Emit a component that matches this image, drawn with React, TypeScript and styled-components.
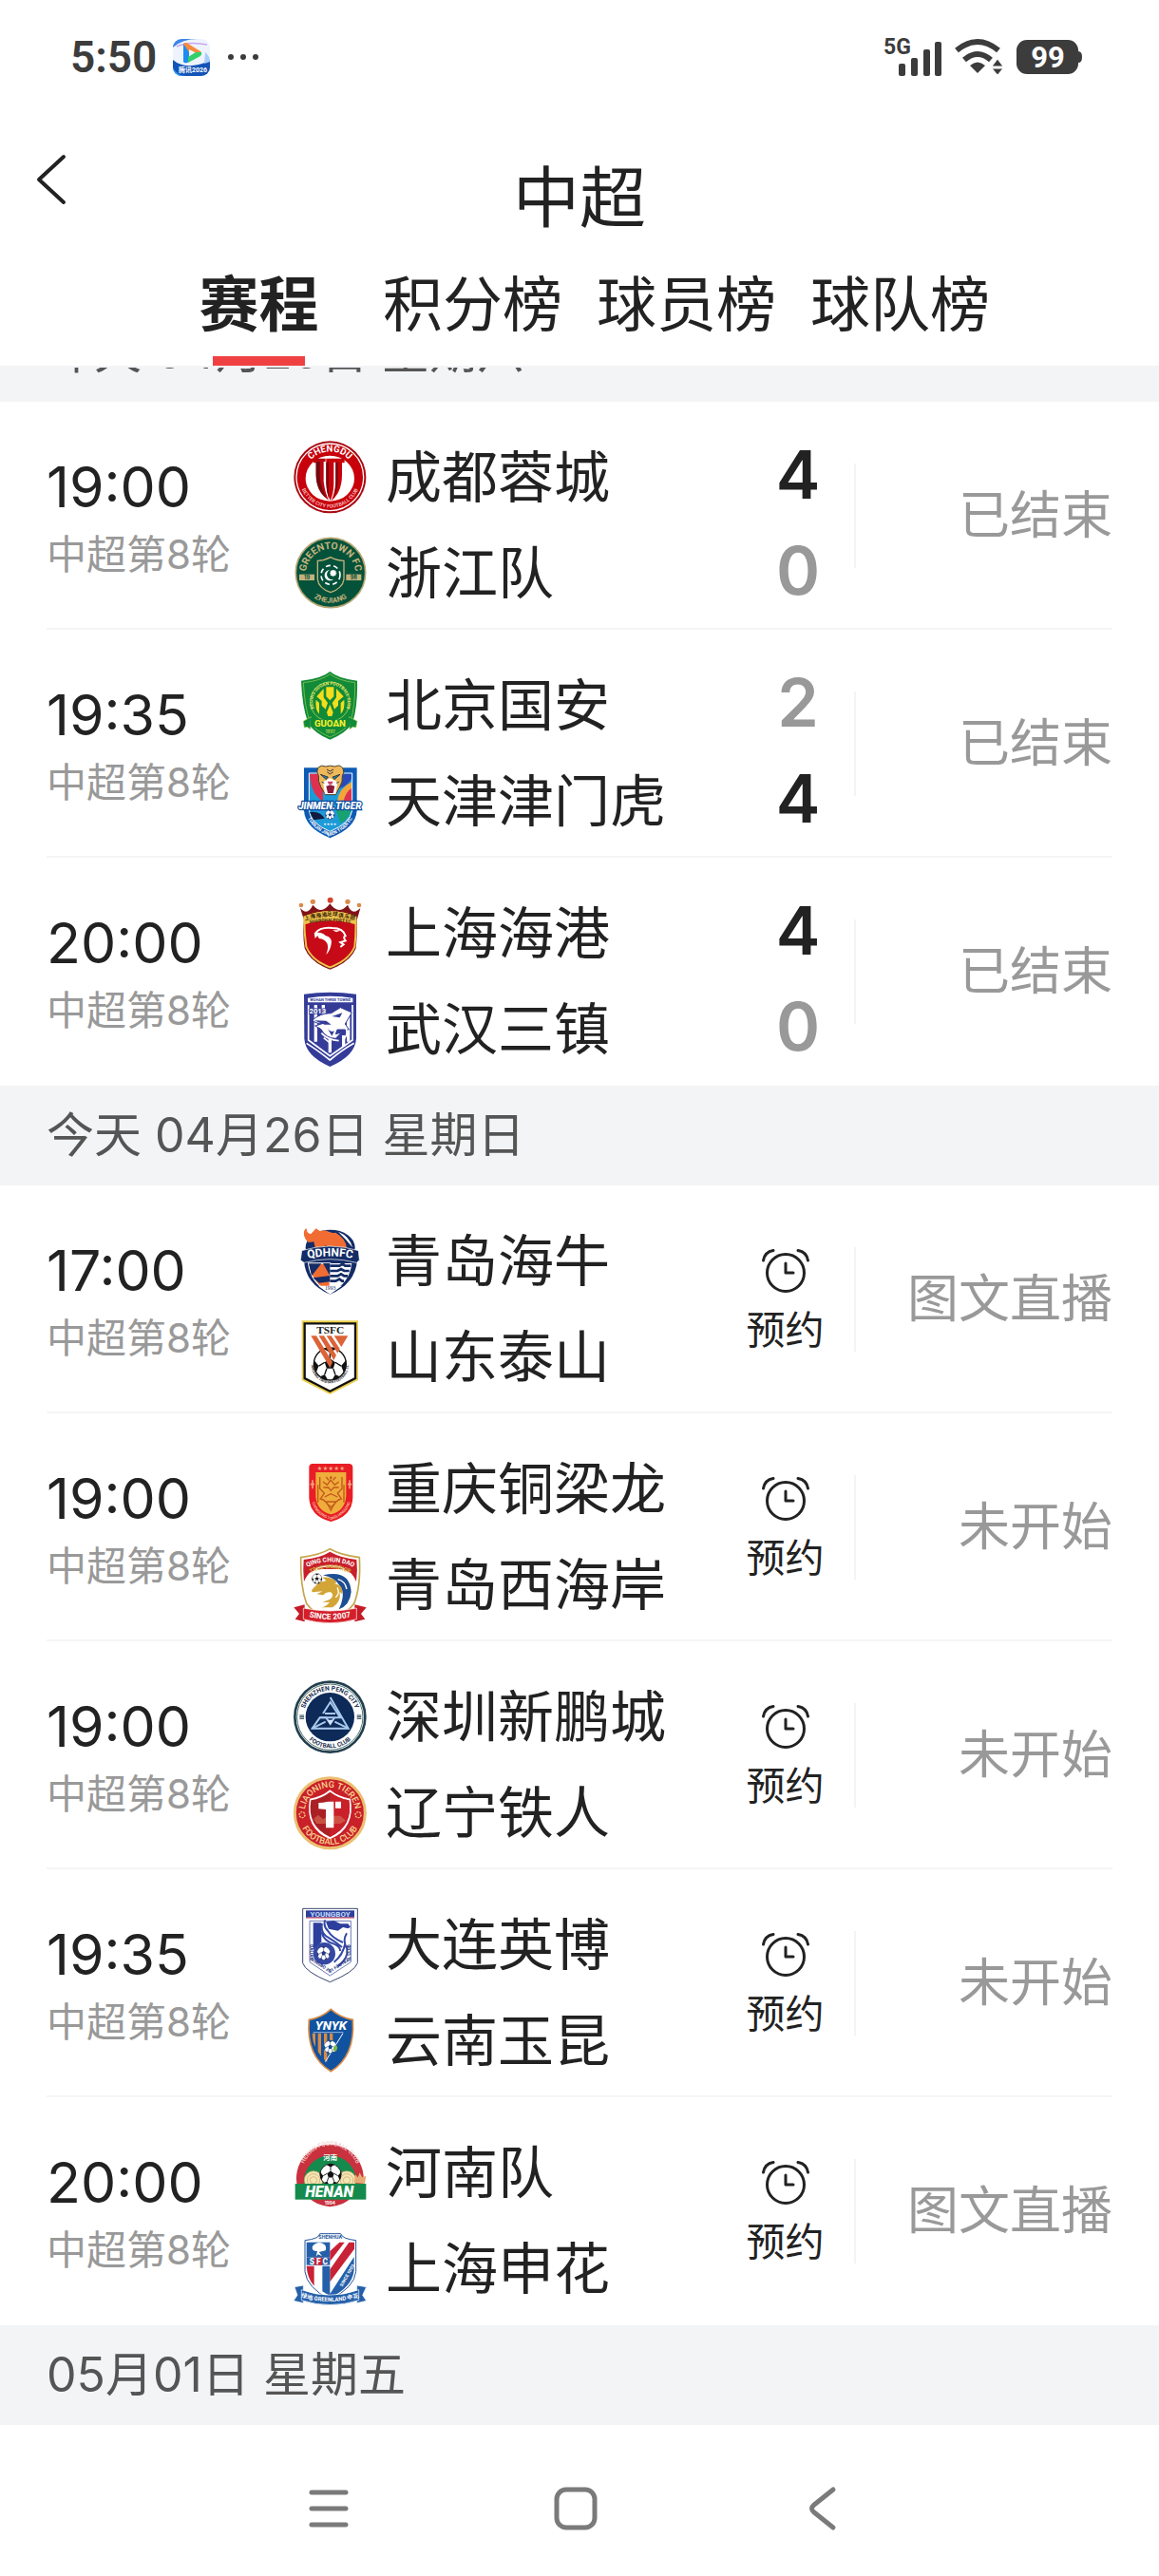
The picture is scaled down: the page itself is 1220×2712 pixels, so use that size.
import React, { useState } from 'react';
import styled, { createGlobalStyle } from 'styled-components';

const INK = '#222';
const MUTED = '#999';
const STRIP = '#f3f4f6';
const STATUS_INK = '#3c3c3c';

const GlobalStyle = createGlobalStyle`
  * { box-sizing: border-box; }
  body {
    margin: 0;
    background: #fff;
    color: ${INK};
    font-family: Inter, "Noto Sans CJK SC", sans-serif;
  }
  button {
    margin: 0;
    padding: 0;
    border: 0;
    background: none;
    color: inherit;
    font: inherit;
    cursor: pointer;
  }
  h1, h2, p, ul { margin: 0; padding: 0; font-weight: 400; list-style: none; }
  a { color: inherit; text-decoration: none; }
  svg { display: block; overflow: visible; }
`;

const Screen = styled.div`
  display: flex;
  flex-direction: column;
  min-height: 100vh;
  background: #fff;
`;

const StatusBar = styled.div`
  display: flex;
  align-items: center;
  justify-content: space-between;
  height: 120px;
  padding: 0 80px 0 74px;
  color: ${STATUS_INK};
  font-family: Roboto, "Noto Sans CJK SC", sans-serif;
`;

const StatusGroup = styled.div<{ $gap: number }>`
  display: flex;
  align-items: center;
  gap: ${(p) => p.$gap}px;
`;

const Clock = styled.span`
  font-size: 46px;
  line-height: 48px;
  font-weight: 600;
`;

const TitleBar = styled.header`
  display: grid;
  grid-template-columns: 100px 1fr 100px;
  height: 140px;
`;

const BackButton = styled.button`
  display: flex;
  align-items: flex-start;
  padding: 40px 0 0 36px;
`;

const Title = styled.h1`
  padding-top: 39px;
  font-size: 70px;
  line-height: 100px;
  text-align: center;
`;

const Tabs = styled.nav`
  display: flex;
  justify-content: center;
  height: 125px;
`;

const Tab = styled.button<{ $active: boolean }>`
  display: flex;
  flex-direction: column;
  align-items: center;
  justify-content: space-between;
  width: 225px;
  padding-top: 20px;
  font-size: 63px;
  line-height: 80px;
  font-weight: ${(p) => (p.$active ? 700 : 400)};

  &::after {
    content: '';
    width: 97px;
    height: 10px;
    background: ${(p) => (p.$active ? '#f04142' : 'transparent')};
  }
`;

const Viewport = styled.main`
  overflow: hidden;
  border-top: 2px solid ${STRIP};
`;

/* The list is scrolled by most of one date strip. */
const Scrolled = styled.div`
  margin-top: -69px;
`;

const DateStrip = styled.h2`
  height: 105px;
  padding: 0 49px;
  background: ${STRIP};
  color: #555;
  font-size: 50px;
  line-height: 105px;
`;

const MatchList = styled.ul`
  padding: 0 49px;
`;

const MatchRow = styled.li`
  display: flex;
  height: 240px;

  &:not(:last-child) {
    border-bottom: 2px solid #f5f5f5;
  }
`;

const TimeColumn = styled.div`
  display: flex;
  flex-direction: column;
  gap: 19px;
  width: 260px;
  padding-top: 59px;
`;

const Kickoff = styled.time`
  font-size: 59px;
  line-height: 62px;
`;

const Round = styled.span`
  color: ${MUTED};
  font-size: 42px;
  line-height: 42px;
`;

const Teams = styled.div`
  display: flex;
  flex: 1;
  flex-direction: column;
  gap: 24px;
  padding-top: 41px;
`;

const Team = styled.div`
  display: flex;
  align-items: center;
  gap: 20px;
  height: 77px;
  font-size: 59px;
  line-height: 77px;
  white-space: nowrap;
`;

const Scores = styled.div`
  display: flex;
  flex-direction: column;
  gap: 24px;
  width: 145px;
  padding: 38px 0 0 27px;
`;

const Score = styled.span<{ $winner: boolean }>`
  color: ${(p) => (p.$winner ? INK : MUTED)};
  font-size: 70px;
  line-height: 77px;
  font-weight: 600;
  text-align: center;
`;

const Reserve = styled.button`
  display: flex;
  flex-direction: column;
  align-items: center;
  gap: 16px;
  width: 145px;
  padding-top: 65px;
  font-size: 41px;
  line-height: 42px;
`;

const StateColumn = styled.div`
  display: flex;
  align-items: center;
  justify-content: flex-end;
  width: 272px;
  height: 110px;
  margin-top: 65px;
  border-left: 2px solid #f4f4f4;
  color: ${MUTED};
  font-size: 54px;
  line-height: 60px;
`;

const SystemNav = styled.nav`
  display: flex;
  flex: 1;
  align-items: center;
  justify-content: center;
  gap: 200px;
  padding: 16px 8px 0 0;
  color: #7a7a7a;
`;

const NavButton = styled.button`
  display: grid;
  place-items: center;
  width: 60px;
  height: 60px;
`;

/* ---------- small drawings ---------- */

const VideoAppIcon = () => (
  <svg width="39" height="39" viewBox="0 0 39 39" aria-hidden="true">
    <defs>
      <clipPath id="appClip"><rect width="39" height="39" rx="9" /></clipPath>
    </defs>
    <g clipPath="url(#appClip)">
      <rect width="39" height="39" fill="#eef4fd" />
      <path d="M0 9Q10 0 26 0H0Z" fill="#3d86e8" />
      <path d="M4 8Q16 2 36 6" stroke="#c9a7ee" strokeWidth="1.5" fill="none" />
      <path d="M0 22Q8 29 20 28T39 22V39H0Z" fill="#1454b8" />
      <path d="M34 14Q39 18 39 24L33 26Z" fill="#a9cdf8" />
      <path d="M0 30Q4 39 14 39H0Z" fill="#35a4ff" />
      <path d="M11 5V24Q12 26 15 25L17 24V12Z" fill="#1e8bf0" />
      <path d="M11 5Q13 3 16 5L29 13Q31 15 29 17L17 11V14Z" fill="#f78a3c" />
      <path d="M30 14Q31 16 29 18L16 25V19L24 14Z" fill="#33cf6a" />
      <text x="21" y="35" fontSize="7" fontWeight="700" fill="#fff" textAnchor="middle">腾讯2026</text>
    </g>
  </svg>
);

const Dots = () => (
  <svg width="36" height="8" viewBox="0 0 36 8" fill="currentColor" aria-hidden="true">
    <circle cx="5" cy="4" r="3" /><circle cx="18" cy="4" r="3" /><circle cx="31" cy="4" r="3" />
  </svg>
);

const Signal = () => (
  <svg width="62" height="42" viewBox="0 0 62 42" fill="currentColor" aria-label="5G">
    <text x="0" y="18" fontSize="23" fontWeight="700">5G</text>
    <rect x="16" y="28" width="7" height="13" rx="2" />
    <rect x="29" y="22" width="7" height="19" rx="2" />
    <rect x="42" y="13" width="7" height="28" rx="2" />
    <rect x="54" y="5" width="7" height="36" rx="2" />
  </svg>
);

const Wifi = () => (
  <svg width="52" height="38" viewBox="0 0 52 38" aria-hidden="true">
    <g fill="none" stroke="currentColor" strokeWidth="6">
      <path d="M2 12Q24 -6 46 12" />
      <path d="M10 22Q24 10 38 22" />
    </g>
    <path d="M16 28Q24 21 32 28L24 36Z" fill="currentColor" />
    <path d="M45 21L51 29H39ZM39 31H51L45 38Z" fill="currentColor" stroke="#fff" strokeWidth="1" />
  </svg>
);

const Battery = () => (
  <svg width="70" height="36" viewBox="0 0 70 36" aria-label="99%">
    <rect width="65" height="36" rx="11" fill="currentColor" />
    <path d="M65 12Q69 12 69 18T65 24Z" fill="currentColor" />
    <text x="33" y="29" fontSize="31" fontWeight="700" fill="#fff" textAnchor="middle">99</text>
  </svg>
);

const BackChevron = () => (
  <svg width="34" height="58" viewBox="0 0 34 58" fill="none" stroke="currentColor" strokeWidth="4" strokeLinecap="round" strokeLinejoin="round" aria-hidden="true">
    <path d="M31 5L5 29L31 53" />
  </svg>
);

const AlarmIcon = () => (
  <svg width="52" height="50" viewBox="0 0 52 50" fill="none" stroke="currentColor" strokeWidth="3" strokeLinecap="round" aria-hidden="true">
    <circle cx="26" cy="27" r="19.5" />
    <path d="M26 17V27H34" strokeLinejoin="round" />
    <path d="M2.500 14Q4 5 13 3.500M49.500 14Q48 5 39 3.500" />
  </svg>
);

const MenuIcon = () => (
  <svg width="42" height="42" viewBox="0 0 42 42" stroke="currentColor" strokeWidth="5" strokeLinecap="round" aria-hidden="true">
    <path d="M3 4H39M3 21H39M3 38H39" />
  </svg>
);

const HomeIcon = () => (
  <svg width="46" height="46" viewBox="0 0 46 46" fill="none" stroke="currentColor" strokeWidth="5" aria-hidden="true">
    <rect x="3" y="3" width="40" height="40" rx="10" />
  </svg>
);

const NavBackIcon = () => (
  <svg width="30" height="46" viewBox="0 0 30 46" fill="none" stroke="currentColor" strokeWidth="5" strokeLinecap="round" aria-hidden="true">
    <path d="M26 3L6 19Q1 23 6 27L26 43" />
  </svg>
);

/* ---------- club crests ---------- */

type ArcProps = {
  id: string;
  d: string;
  size: number;
  fill: string;
  weight?: number;
  children: string;
};

const ArcText = ({ id, d, size, fill, weight = 700, children }: ArcProps) => (
  <>
    <path id={id} d={d} fill="none" />
    <text fontSize={size} fontWeight={weight} fill={fill} textAnchor="middle" fontFamily="Roboto, sans-serif">
      <textPath href={`#${id}`} startOffset="50%">{children}</textPath>
    </text>
  </>
);

const Ball = ({ x, y, r, ink = '#111' }: { x: number; y: number; r: number; ink?: string }) => (
  <g transform={`translate(${x} ${y}) scale(${r / 50})`}>
    <circle r="49" fill="#fff" stroke={ink} strokeWidth="4" />
    <path
      fill={ink}
      d="M0-17L16-5L10 14H-10L-16-5ZM-18-46Q0-54 18-46L0-34ZM49-12Q52 8 42 26L34 6ZM30 38Q18 49 6 49L16 32ZM-30 38Q-18 49-6 49L-16 32ZM-49-12Q-52 8-42 26L-34 6Z"
    />
    <path d="M0-17V-34M16-5L34 6M10 14L16 32M-10 14L-16 32M-16-5L-34 6" stroke={ink} strokeWidth="4" />
  </g>
);

const Crest = ({ top, children }: { top: number; children: React.ReactNode }) => (
  <svg width="77" height="77" viewBox={`57 ${top} 231 231`} aria-hidden="true">{children}</svg>
);

const Chengdu = () => (
  <Crest top={42}>
    <circle cx="172" cy="157" r="114" fill="#a80a12" />
    <circle cx="172" cy="157" r="106" fill="#c8000b" stroke="#fff" strokeWidth="4" />
    <ellipse cx="172" cy="161" rx="77" ry="72" fill="#fff" />
    <path d="M120 98H158V108H152V170Q156 205 168 230Q128 205 128 150V112H120Z" fill="#b80710" />
    <path d="M140 108V155Q142 190 160 222Q128 195 128 150V110Z" fill="#6f0910" />
    <path d="M160 98H218V112H210V150Q210 205 176 232Q190 200 190 165V110H184V180Q183 210 173 232Q161 206 160 175Z" fill="#c8000b" />
    <path d="M160 110H168V225Q160 200 160 175ZM190 110H197V172Q196 200 184 222Q190 200 190 165Z" fill="#750a12" />
    <ArcText id="chengduTop" d="M91 157A81 81 0 0 1 253 157" size={29} fill="#fff">CHENGDU</ArcText>
    <ArcText id="chengduBottom" d="M75 157A97 97 0 0 0 269 157" size={16} fill="#f3b9b9">BETTER CITY FOOTBALL CLUB</ArcText>
  </Crest>
);

const Zhejiang = () => (
  <Crest top={345}>
    <circle cx="174" cy="459" r="110" fill="#04523a" stroke="#b5a673" strokeWidth="5" />
    <rect x="75" y="464" width="48" height="19" fill="#c4b27c" />
    <rect x="223" y="464" width="48" height="19" fill="#c4b27c" />
    <path d="M133 421Q156 420 174 410Q192 420 216 421V480Q212 508 174 521Q136 508 133 480Z" fill="#04523a" stroke="#c4b27c" strokeWidth="4" />
    <circle cx="174" cy="466" r="30" fill="none" stroke="#fff" strokeWidth="5" strokeDasharray="15 10" />
    <path d="M172 450A17 17 0 1 0 184 479A14 14 0 1 1 172 450Z" fill="#fff" />
    <path d="M175 453H189V467H175ZM182 450V471M172 460H193" fill="#fff" stroke="#fff" strokeWidth="3" />
    <text x="99" y="480" fontSize="17" fontWeight="700" textAnchor="middle" fill="#04523a">19</text>
    <text x="247" y="480" fontSize="17" fontWeight="700" textAnchor="middle" fill="#04523a">98</text>
    <ArcText id="zheTop" d="M96 462A78 78 0 0 1 252 462" size={31} fill="#c4b27c">GREENTOWN FC</ArcText>
    <ArcText id="zheBottom" d="M79 459A95 95 0 0 0 269 459" size={23} fill="#c4b27c">ZHEJIANG</ArcText>
  </Crest>
);

const Guoan = () => (
  <Crest top={762}>
    <path d="M172 771Q200 794 258 800Q260 880 244 930Q225 966 172 986Q120 966 102 930Q84 880 81 800Q145 794 172 771Z" fill="#118b38" />
    <path d="M172 779Q200 800 251 806Q252 880 237 928Q222 958 172 978Q124 958 108 928Q92 880 88 806Q145 800 172 779Z" fill="none" stroke="#a4d05a" strokeWidth="2" />
    <circle cx="172" cy="866" r="62" fill="none" stroke="#d9e157" strokeWidth="2" />
    <circle cx="172" cy="867" r="48" fill="#118b38" />
    <path d="M160 820H184V850L172 862L160 850ZM152 825V853L165 870L158 890L146 878V864L130 850ZM192 825V853L179 870L186 890L198 878V864L215 850ZM128 860L138 870V905Q124 890 128 860ZM217 860L206 870V905Q220 890 217 860ZM172 875L182 900L178 912H166L162 900Z" fill="#f4dd1c" />
    <path d="M88 928L112 914L110 953L100 946L91 948ZM258 928L232 914L234 953L244 946L254 948Z" fill="#118b38" stroke="#a4d05a" strokeWidth="2" />
    <path d="M110 917Q172 930 234 917V946Q172 956 110 946Z" fill="#118b38" />
    <text x="172" y="945" fontSize="29" fontWeight="800" textAnchor="middle" fill="#f4ef2b" fontFamily="Roboto, sans-serif">GUOAN</text>
    <text x="173" y="965" fontSize="14" textAnchor="middle" fill="#d9e157">1992</text>
    <ArcText id="guoanArc" d="M132 905A55 55 0 1 1 213 905" size={14} fill="#e6e66a">BEIJING GUOAN FOOTBALL CLUB</ArcText>
  </Crest>
);

const Tiger = () => (
  <Crest top={1065}>
    <path d="M90 1075H257V1210Q254 1265 172 1297Q93 1265 90 1210Z" fill="#0e5bb5" />
    <path d="M106 1092H242V1210Q236 1250 172 1276Q110 1250 106 1210Z" fill="#1c9bd8" stroke="#fff" strokeWidth="3" />
    <path d="M108 1094H150V1180Q112 1160 108 1094Z" fill="#e0304f" />
    <path d="M240 1094H200V1140Q225 1135 240 1110Z" fill="#2a49b8" />
    <path d="M240 1120Q200 1140 195 1180H240Z" fill="#f0a63a" />
    <path d="M240 1140Q222 1150 215 1180H240Z" fill="#de3152" />
    <path d="M108 1215Q140 1210 155 1235L120 1240Z" fill="#121b3f" />
    <path d="M190 1205H238Q236 1235 205 1250Z" fill="#18a270" />
    <path d="M134 1075Q145 1064 158 1071Q173 1066 188 1071Q204 1063 213 1077Q219 1090 211 1100Q213 1120 203 1135L190 1160H158L143 1135Q134 1118 136 1100Q128 1088 134 1075Z" fill="#efb95b" stroke="#46412c" strokeWidth="3" />
    <path d="M150 1120L172 1108L196 1120L190 1158H156Z" fill="#fff" />
    <path d="M142 1096L166 1104L160 1112ZM204 1096L180 1104L186 1112Z" fill="#2b7fb1" stroke="#111" strokeWidth="2" />
    <path d="M162 1080L172 1086L183 1080M163 1088L172 1095L182 1088M146 1120L154 1123M200 1120L192 1123" stroke="#333" strokeWidth="3" fill="none" />
    <path d="M164 1118H182L178 1127H168Z" fill="#d04467" />
    <path d="M160 1133L173 1129L187 1133L182 1155H165Z" fill="#8d1a39" />
    <ArcText id="tigerArc" d="M97 1210Q103 1266 172 1290Q241 1266 250 1210" size={15} fill="#fff">TIANJIN JINMEN TIGER FC</ArcText>
    <text x="172" y="1205" fontSize="30" fontWeight="900" fontStyle="italic" textAnchor="middle" fill="#fff" stroke="#0d4ca0" strokeWidth="7" paintOrder="stroke" fontFamily="Roboto, sans-serif">JINMEN.TIGER</text>
    <Ball x={172} y={1223} r={15} ink="#12377f" />
    <text x="172" y="1257" fontSize="10" textAnchor="middle" fill="#fff">★★★★</text>
  </Crest>
);

const Port = () => (
  <Crest top={42}>
    <path d="M78 78Q101 104 118 68Q145 102 172 64Q199 102 228 68Q242 104 268 78L257 116Q258 170 254 205Q236 250 172 272Q110 250 92 205Q85 160 90 116Z" fill="#811317" />
    <path d="M91 106Q172 75 253 106Q255 160 250 200Q232 244 172 265Q114 244 97 200Q90 150 91 106Z" fill="#c70a18" stroke="#edc34b" strokeWidth="6" />
    <path d="M92 104Q172 72 253 104V130Q172 106 92 130Z" fill="#edc34b" />
    <g fill="#d88b4b"><circle cx="81" cy="69" r="7" /><circle cx="118" cy="58" r="8" /><circle cx="228" cy="58" r="8" /><circle cx="264" cy="69" r="7" /></g>
    <circle cx="173" cy="53" r="9" fill="#d4432e" />
    <path d="M126 158Q140 137 180 141Q214 141 221 166Q212 168 221 181L205 186L215 193L205 201" fill="none" stroke="#fff" strokeWidth="6" />
    <path d="M122 157Q144 152 158 165Q181 171 176 192Q173 212 160 225Q169 202 163 190Q155 175 137 174L133 165L125 174Z" fill="#fff" />
    <path d="M180 148H208L192 154Z" fill="#fff" />
    <ArcText id="portCn" d="M92 117Q172 89 253 117" size={17} fill="#3d250b">上海海港足球俱乐部</ArcText>
    <ArcText id="portEn" d="M92 131Q172 109 253 131" size={14} fill="#3d250b">SHANGHAI PORT FC</ArcText>
  </Crest>
);

const Wuhan = () => (
  <Crest top={345}>
    <path d="M90 350Q172 338 255 350V490Q252 545 172 579Q94 545 91 490Z" fill="#343c98" />
    <path d="M102 362Q172 350 244 362V376H102Z" fill="#fff" />
    <text x="173" y="373" fontSize="12" fontWeight="700" textAnchor="middle" fill="#343c98" fontFamily="Roboto, sans-serif">WUHAN THREE TOWNS</text>
    <path d="M104 384V495L172 545L243 495V384" fill="none" stroke="#fff" strokeWidth="5" />
    <path d="M127 384V500M151 384V460M172 490V535M215 480V515M230 410V500" stroke="#fff" strokeWidth="10" />
    <text x="133" y="410" fontSize="23" fontWeight="800" textAnchor="middle" fill="#fff" stroke="#343c98" strokeWidth="5" paintOrder="stroke" fontFamily="Roboto, sans-serif">2013</text>
    <path d="M117 432Q140 410 176 410L205 392L241 408L220 444L232 462H195L190 476L208 471L190 490Q160 490 143 460L125 450L151 442Q125 444 117 432Z" fill="#fff" stroke="#343c98" strokeWidth="3" />
    <path d="M178 420L211 409L203 424ZM122 433L160 434L176 446H155ZM165 460Q174 472 186 466L178 482Z" fill="#343c98" />
    <path d="M145 473Q165 495 200 497M152 488L170 502M217 450Q233 470 218 490" fill="none" stroke="#fff" strokeWidth="5" />
    <path d="M98 505Q130 525 172 558Q212 525 248 505" fill="none" stroke="#fff" strokeWidth="5" />
  </Crest>
);

const Hainiu = () => (
  <Crest top={27}>
    <ellipse cx="173" cy="100" rx="78" ry="56" fill="#142c66" />
    <path d="M90 140H258Q252 215 172 248Q94 215 90 140Z" fill="#142c66" />
    <path d="M198 50Q235 65 243 100L222 75ZM150 48L175 52L155 57Z" fill="#fff" />
    <path d="M90 62Q88 42 98 40Q99 58 112 57L128 40L140 48L158 46Q172 56 190 53Q222 72 225 101H205L190 95L175 105L158 93L146 108H127L121 82L104 84L95 74Z" fill="#f16c32" />
    <path d="M104 150H172V242Q112 214 104 150Z" fill="#f16c32" stroke="#fff" strokeWidth="4" />
    <path d="M172 150H241Q234 214 172 244Z" fill="#fff" />
    <path d="M105 151H145L114 190ZM118 196L172 189V208L138 212ZM150 150H172V190Z" fill="#142c66" />
    <path d="M172 158H202L212 152L220 158H238M172 174H196L207 168L217 174H233M172 190H196L207 184L217 190H228M172 206H190L202 200L210 206H216" stroke="#142c66" strokeWidth="8" fill="none" />
    <path d="M135 221H210L172 248Z" fill="#fff" />
    <text x="173" y="235" fontSize="17" textAnchor="middle" fill="#142c66" fontFamily="Liberation Serif, serif">1993</text>
    <path d="M83 110Q172 82 262 110L265 140L256 148Q172 126 90 148L79 140Z" fill="#142c66" stroke="#fff" strokeWidth="2" />
    <ArcText id="hainiuArc" d="M83 139Q172 116 262 139" size={36} fill="#fff">QDHNFC</ArcText>
  </Crest>
);

const Taishan = () => (
  <Crest top={330}>
    <path d="M83 331H261V519L172 564L83 519Z" fill="#e9cf4d" />
    <path d="M92 340H252V513L172 554L92 513Z" fill="#fff" stroke="#111" strokeWidth="7" />
    <text x="173" y="371" fontSize="34" fontWeight="700" textAnchor="middle" fill="#222" fontFamily="Liberation Serif, serif">TSFC</text>
    <Ball x={172} y={468} r={52} />
    <path d="M112 379H129L180 462L172 480ZM137 379H153L192 440L184 456ZM161 379H176L203 420L196 434ZM185 379H229L208 414Z" fill="#dc6238" />
    <ArcText id="taishanArc" d="M113 470A59 59 0 0 0 231 470" size={12} fill="#333">SHANDONG TAISHAN FOOTBALL CLUB</ArcText>
  </Crest>
);

const Tongliang = () => (
  <Crest top={747}>
    <path d="M115 783H234Q244 785 244 795V890Q242 948 175 966Q108 948 106 890V795Q106 785 115 783Z" fill="#e91d25" />
    <path d="M127 810H223V885Q220 932 175 943Q130 932 127 885Z" fill="#efad3b" />
    <text x="175" y="803" fontSize="17" textAnchor="middle" fill="#f3ab83">★★★★★</text>
    <g fill="none" stroke="#c2571d" strokeWidth="4">
      <path d="M140 825V862L154 876L142 894Q160 896 175 930Q190 896 208 894L196 876L210 862V825" />
      <path d="M150 840L163 850L174 834L187 850L200 840M151 858H167L175 868L184 858H200M155 888L175 878L196 888M160 903H191M166 912L175 920L185 912" />
      <path d="M134 850V905M216 850V905M160 825L168 835M190 825L182 835" />
    </g>
    <circle cx="175" cy="827" r="4" fill="#c2571d" />
    <path d="M117 835V862M110 848H123M234 835V862M228 848H241" stroke="#f6a37d" strokeWidth="5" />
    <ArcText id="tongliangArc" d="M112 888Q118 944 175 960Q232 944 240 888" size={12} fill="#f8b29b">CHONGQING TONGLIANGLONG</ArcText>
  </Crest>
);

const WestCoast = () => (
  <Crest top={1050}>
    <path d="M58 1237L92 1228V1282L62 1274L75 1257ZM287 1237L250 1228V1282L283 1274L270 1257Z" fill="#c51b26" />
    <path d="M172 1052Q205 1071 265 1079Q270 1170 248 1225Q225 1258 172 1270Q120 1258 98 1225Q78 1170 80 1079Q142 1071 172 1052Z" fill="#fff" stroke="#c6a54b" strokeWidth="5" />
    <path d="M172 1061Q205 1080 256 1086Q260 1120 255 1155Q235 1105 172 1103Q110 1105 90 1155Q86 1120 89 1086Q142 1080 172 1061Z" fill="#c81f2c" />
    <path d="M95 1140Q120 1110 172 1108Q226 1110 250 1140Q246 1125 236 1116H108Q98 1125 95 1140Z" fill="#c81f2c" />
    <circle cx="174" cy="1184" r="62" fill="#fff" />
    <path d="M150 1135Q235 1116 239 1188Q235 1230 200 1243Q225 1190 200 1165Q190 1145 150 1135Z" fill="#1d4d92" />
    <path d="M115 1181L137 1158L160 1153L149 1142Q180 1140 193 1158L187 1162Q214 1166 211 1195L203 1188Q208 1220 180 1237H140Q160 1236 171 1220L148 1220L172 1211Q187 1200 175 1189Q160 1186 151 1198L130 1195L149 1186L115 1189Z" fill="#d2a536" />
    <path d="M197 1148Q220 1154 225 1179M195 1174Q205 1192 190 1205" stroke="#fff" strokeWidth="4" fill="none" />
    <Ball x={131} y={1146} r={16} />
    <ArcText id="coastTop" d="M97 1111Q172 1074 249 1111" size={20} fill="#fff">QING CHUN DAO</ArcText>
    <ArcText id="coastMid" d="M99 1136Q172 1092 247 1136" size={18} fill="#d7ad38">TRUE WARRIOR</ArcText>
    <path d="M88 1239Q172 1257 256 1239V1274Q172 1298 88 1274Z" fill="#d41f2b" stroke="#fff" strokeWidth="2" />
    <ArcText id="coastSince" d="M92 1263Q172 1286 252 1263" size={25} fill="#fff">SINCE 2007</ArcText>
  </Crest>
);

const Shenzhen = () => (
  <Crest top={27}>
    <circle cx="172" cy="143" r="111" fill="#fff" stroke="#233f4e" strokeWidth="8" />
    <circle cx="172" cy="143" r="104" fill="none" stroke="#53756f" strokeWidth="3" />
    <circle cx="172" cy="143" r="77" fill="#0d2a59" />
    <g fill="none" stroke="#a9c9ed" strokeWidth="6">
      <path d="M173 81L230 179H116L140 145H204L173 96L150 132" />
      <path d="M156 132H189M140 145H160L173 165L186 145M116 179L158 158M230 179L187 158" />
    </g>
    <path d="M164 152H182L173 167Z" fill="#d6e7fb" />
    <path d="M76 138H90M76 143H90M76 148H90M257 138H271M257 143H271M257 148H271" stroke="#233f4e" strokeWidth="3" />
    <ArcText id="szTop" d="M88 143A84 84 0 0 1 256 143" size={20} fill="#172c4c">SHENZHEN PENG CITY</ArcText>
    <ArcText id="szBottom" d="M74 143A98 98 0 0 0 270 143" size={19} fill="#172c4c">FOOTBALL CLUB</ArcText>
  </Crest>
);

const Liaoning = () => (
  <Crest top={330}>
    <circle cx="172" cy="446" r="111" fill="#c9202a" stroke="#eabf70" strokeWidth="9" />
    <path d="M172 373Q198 395 237 401Q253 495 172 529Q91 495 108 401Q146 395 172 373Z" fill="#fff" />
    <path d="M172 380Q200 401 232 406Q246 488 172 522Q98 488 112 406Q144 401 172 380Z" fill="#ab2025" />
    <path d="M172 380Q200 401 232 406Q246 488 172 522Z" fill="#c9202a" />
    <path d="M120 465L135 452L150 466L165 455L205 455L222 470L205 480H130Z" fill="#d36650" opacity="0.7" />
    <path d="M136 433V414L150 413L165 410H184V493H159V435ZM189 410H207V431H189Z" fill="#fff" />
    <circle cx="84" cy="452" r="9" fill="none" stroke="#f2c57a" strokeWidth="4" strokeDasharray="6 3" />
    <circle cx="261" cy="452" r="9" fill="none" stroke="#f2c57a" strokeWidth="4" strokeDasharray="6 3" />
    <ArcText id="lnTop" d="M92 446A80 80 0 0 1 252 446" size={28} fill="#f7d38e" weight={500}>LIAONING TIEREN</ArcText>
    <ArcText id="lnBottom" d="M72 446A100 100 0 0 0 272 446" size={28} fill="#f7d38e" weight={500}>FOOTBALL CLUB</ArcText>
  </Crest>
);

const Dalian = () => (
  <Crest top={747}>
    <path d="M86 748H259V920Q250 948 172 980Q94 948 86 920Z" fill="#fff" stroke="#39466e" strokeWidth="3" />
    <rect x="96" y="754" width="153" height="23" fill="#2d3f9c" />
    <rect x="96" y="775" width="153" height="4" fill="#d96c80" />
    <text x="173" y="774" fontSize="24" fontWeight="800" textAnchor="middle" fill="#b9d2f6" fontFamily="Roboto, sans-serif">YOUNGBOY</text>
    <path d="M108 787V917L172 960L238 917V787Z" fill="none" stroke="#6d7bb9" strokeWidth="3" />
    <path d="M119 793H145V853L119 879Z" fill="#2d3f9c" />
    <path d="M159 790L184 786L205 796H229L237 806L229 811L213 807L197 818L168 812Z" fill="#2d3f9c" />
    <g fill="none" stroke="#3448a5" strokeWidth="6">
      <path d="M157 784Q149 802 166 819Q178 840 213 855M147 795Q141 825 166 839Q192 855 210 870M145 821Q152 850 185 860Q203 867 205 882" />
      <path d="M225 826Q210 850 226 875Q231 906 196 931M220 858Q213 895 185 917" />
    </g>
    <circle cx="154" cy="890" r="35" fill="#3448a5" />
    <Ball x={152} y={889} r={22} ink="#28357d" />
    <ArcText id="dalianArc" d="M108 850V910L172 951L238 910V850" size={14} fill="#28357d">DALIAN YINGBO 2021 FOOTBALL CLUB</ArcText>
  </Crest>
);

const Yunnan = () => (
  <Crest top={1050}>
    <path d="M175 1066Q204 1092 244 1099Q252 1215 175 1262Q96 1215 106 1099Q146 1092 175 1066Z" fill="#1152a0" stroke="#d98c45" strokeWidth="5" />
    <g fill="#d98c45">
      <path d="M116 1142H126V1185Q117 1170 116 1142ZM134 1142H144V1214L134 1200ZM153 1142H163V1233L153 1224ZM171 1142H181V1175H171Z" />
    </g>
    <path d="M213 1142L157 1232" stroke="#fff" strokeWidth="3" />
    <Ball x={173} y={1185} r={21} ink="#16488c" />
    <path d="M188 1178Q202 1184 190 1200L181 1195Z" fill="#75b843" />
    <text x="175" y="1132" fontSize="40" fontWeight="800" fontStyle="italic" textAnchor="middle" fill="#fff" fontFamily="Roboto, sans-serif">YNYK</text>
    <path d="M119 1139H214" stroke="#dce7f5" strokeWidth="2" />
  </Crest>
);

const Henan = () => (
  <Crest top={27}>
    <path d="M68 180A106 106 0 1 1 276 180Z" fill="#c8313d" />
    <path d="M90 180A83 83 0 1 1 255 180Z" fill="#148b4d" />
    <text x="173" y="101" fontSize="22" fontWeight="700" textAnchor="middle" fill="#fff">河南</text>
    <g fill="#f4e5b4" stroke="#caa563" strokeWidth="2">
      <circle cx="120" cy="166" r="29" /><circle cx="120" cy="166" r="20" /><circle cx="120" cy="166" r="11" />
      <circle cx="225" cy="166" r="29" /><circle cx="225" cy="166" r="20" /><circle cx="225" cy="166" r="11" />
    </g>
    <path d="M248 174L252 148L260 157L266 142L274 157L286 152L282 177Z" fill="#e6ab75" />
    <Ball x={174} y={148} r={34} />
    <path d="M107 222H237Q222 243 172 250Q124 243 107 222Z" fill="#c8313d" />
    <rect x="62" y="177" width="224" height="50" fill="#148b4d" />
    <text x="170" y="219" fontSize="47" fontWeight="900" fontStyle="italic" textAnchor="middle" fill="#fff" fontFamily="Roboto, sans-serif">HENAN</text>
    <text x="172" y="243" fontSize="14" fontWeight="700" textAnchor="middle" fill="#fff">1994</text>
    <ArcText id="henanArc" d="M85 145A88 88 0 0 1 261 145" size={19} fill="#f5cfd1" weight={500}>HENAN FOOTBALL CLUB</ArcText>
  </Crest>
);

const Shenhua = () => (
  <Crest top={330}>
    <path d="M93 356Q138 351 140 335H206Q210 351 254 356V455Q249 505 172 543Q99 505 93 455Z" fill="#fff" stroke="#24549a" strokeWidth="3" />
    <text x="173" y="352" fontSize="16" fontWeight="700" textAnchor="middle" fill="#24549a" fontFamily="Roboto, sans-serif">SHENHUA</text>
    <path d="M98 362H172V410H98Z" fill="#2460aa" />
    <path d="M98 410H172V434H98Z" fill="#2460aa" />
    <rect x="122" y="410" width="26" height="24" fill="#c82237" />
    <text x="136" y="431" fontSize="25" fontWeight="800" textAnchor="middle" fill="#fff" fontFamily="Roboto, sans-serif">S F C</text>
    <path d="M117 374Q132 358 150 366Q163 372 158 388L137 393L147 406L134 400L128 407L132 390Q112 390 117 374Z" fill="#fff" />
    <path d="M98 437H122V500Q100 475 98 437ZM172 390L202 362H218L172 422ZM172 448L232 362H249V383L172 487Z" fill="#c82237" />
    <path d="M148 437H172V532L148 517ZM172 525L248 408V451Q242 504 172 538Z" fill="#2460aa" />
    <text x="0" y="0" transform="translate(211 503) rotate(-60)" fontSize="14" fontWeight="700" fill="#fff">SINCE 1993</text>
    <path d="M60 503L88 498V554L57 547L69 529ZM287 503L257 498V554L287 547L275 529Z" fill="#2460aa" stroke="#fff" strokeWidth="2" />
    <path d="M82 512Q172 545 263 512V545Q172 574 82 545Z" fill="#2460aa" stroke="#fff" strokeWidth="2" />
    <ArcText id="shenhuaArc" d="M82 535Q172 563 263 535" size={18} fill="#fff">绿地 GREENLAND 申花</ArcText>
  </Crest>
);

/* ---------- data ---------- */

type Side = { name: string; crest: React.ComponentType; score?: number };
type Match = { time: string; state: string; live?: boolean; home: Side; away: Side };
type Day = { label: string; matches: Match[] };

const DAYS: Day[] = [
  {
    label: '昨天 04月25日 星期六',
    matches: [
      { time: '19:00', state: '已结束', home: { name: '成都蓉城', crest: Chengdu, score: 4 }, away: { name: '浙江队', crest: Zhejiang, score: 0 } },
      { time: '19:35', state: '已结束', home: { name: '北京国安', crest: Guoan, score: 2 }, away: { name: '天津津门虎', crest: Tiger, score: 4 } },
      { time: '20:00', state: '已结束', home: { name: '上海海港', crest: Port, score: 4 }, away: { name: '武汉三镇', crest: Wuhan, score: 0 } },
    ],
  },
  {
    label: '今天 04月26日 星期日',
    matches: [
      { time: '17:00', state: '图文直播', live: true, home: { name: '青岛海牛', crest: Hainiu }, away: { name: '山东泰山', crest: Taishan } },
      { time: '19:00', state: '未开始', home: { name: '重庆铜梁龙', crest: Tongliang }, away: { name: '青岛西海岸', crest: WestCoast } },
      { time: '19:00', state: '未开始', home: { name: '深圳新鹏城', crest: Shenzhen }, away: { name: '辽宁铁人', crest: Liaoning } },
      { time: '19:35', state: '未开始', home: { name: '大连英博', crest: Dalian }, away: { name: '云南玉昆', crest: Yunnan } },
      { time: '20:00', state: '图文直播', live: true, home: { name: '河南队', crest: Henan }, away: { name: '上海申花', crest: Shenhua } },
    ],
  },
  { label: '05月01日 星期五', matches: [] },
];

const TABS = ['赛程', '积分榜', '球员榜', '球队榜'];

const TeamLine = ({ side }: { side: Side }) => {
  const Logo = side.crest;
  return (
    <Team>
      <Logo />
      <span>{side.name}</span>
    </Team>
  );
};

const MatchItem = ({ match }: { match: Match }) => {
  const { home, away } = match;
  const played = home.score !== undefined && away.score !== undefined;
  return (
    <MatchRow>
      <TimeColumn>
        <Kickoff>{match.time}</Kickoff>
        <Round>中超第8轮</Round>
      </TimeColumn>
      <Teams>
        <TeamLine side={home} />
        <TeamLine side={away} />
      </Teams>
      {played ? (
        <Scores>
          <Score $winner={home.score! > away.score!}>{home.score}</Score>
          <Score $winner={away.score! > home.score!}>{away.score}</Score>
        </Scores>
      ) : (
        <Reserve type="button">
          <AlarmIcon />
          预约
        </Reserve>
      )}
      <StateColumn>{match.live ? <a href="#live">{match.state}</a> : match.state}</StateColumn>
    </MatchRow>
  );
};

export default function App() {
  const [active, setActive] = useState(0);
  return (
    <Screen>
      <GlobalStyle />
      <StatusBar>
        <StatusGroup $gap={17}>
          <Clock>5:50</Clock>
          <VideoAppIcon />
          <Dots />
        </StatusGroup>
        <StatusGroup $gap={13}>
          <Signal />
          <Wifi />
          <Battery />
        </StatusGroup>
      </StatusBar>
      <TitleBar>
        <BackButton type="button" aria-label="返回"><BackChevron /></BackButton>
        <Title>中超</Title>
      </TitleBar>
      <Tabs>
        {TABS.map((label, i) => (
          <Tab key={label} type="button" $active={i === active} onClick={() => setActive(i)}>
            {label}
          </Tab>
        ))}
      </Tabs>
      <Viewport>
        <Scrolled>
          {DAYS.map((day) => (
            <section key={day.label}>
              <DateStrip>{day.label}</DateStrip>
              <MatchList>
                {day.matches.map((match) => (
                  <MatchItem key={match.home.name} match={match} />
                ))}
              </MatchList>
            </section>
          ))}
        </Scrolled>
      </Viewport>
      <SystemNav>
        <NavButton type="button" aria-label="最近任务"><MenuIcon /></NavButton>
        <NavButton type="button" aria-label="主页"><HomeIcon /></NavButton>
        <NavButton type="button" aria-label="返回上一页"><NavBackIcon /></NavButton>
      </SystemNav>
    </Screen>
  );
}
